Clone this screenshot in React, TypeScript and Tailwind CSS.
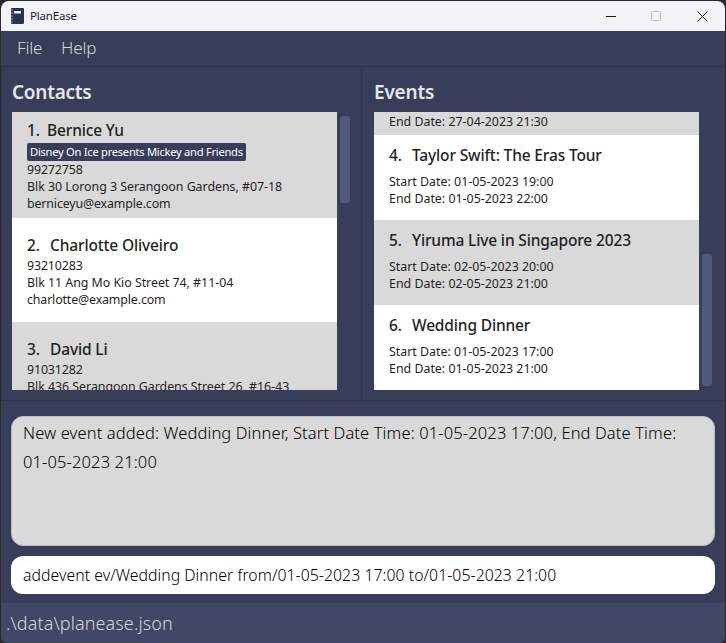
const font = { fontFamily: '"Noto Sans", "Open Sans", sans-serif' };

function ContactCard({ index, name, tag, phone, address, email, shaded }: {
  index: number;
  name: string;
  tag?: string;
  phone: string;
  address: string;
  email?: string;
  shaded: boolean;
}) {
  return (
    <div className={`${shaded ? 'bg-[#d9d9d9]' : 'bg-white'} px-[15px] ${tag ? 'h-[106px] pt-[7px]' : 'h-[104px] pt-[16px]'} shrink-0`}>
      <div className="flex text-[15.5px] leading-[22px] font-medium text-[#1f1f1f] tracking-[-0.15px]">
        <span className={`${index === 1 ? 'w-[20px]' : 'w-[23px]'} whitespace-nowrap`}>{index}.</span>
        <span>{name}</span>
      </div>
      {tag && (
        <div className="mt-[2px] flex">
          <span className="bg-[#383e5a] text-white rounded-[2px] px-[3px] h-[18px] text-[11.2px] leading-[18px] tracking-[-0.28px] whitespace-nowrap">{tag}</span>
        </div>
      )}
      <div className={`${tag ? '' : 'mt-[1px]'} text-[12.4px] leading-[17px] text-[#1f1f1f] tracking-[-0.14px] whitespace-nowrap`}>
        <div>{phone}</div>
        <div className="tracking-[-0.03px]">{address}</div>
        {email && <div>{email}</div>}
      </div>
    </div>
  );
}

function EventCard({ index, name, start, end, shaded }: {
  index: number;
  name: string;
  start: string;
  end: string;
  shaded: boolean;
}) {
  return (
    <div className={`${shaded ? 'bg-[#d9d9d9]' : 'bg-white'} h-[85px] px-[15px] pt-[9px] shrink-0`}>
      <div className="flex text-[15.5px] leading-[22px] font-medium text-[#1f1f1f] tracking-[-0.15px]">
        <span className="w-[23px]">{index}.</span>
        <span>{name}</span>
      </div>
      <div className="mt-[7px] text-[12.4px] leading-[17px] text-[#1f1f1f] whitespace-nowrap">
        <div>Start Date: {start}</div>
        <div>End Date: {end}</div>
      </div>
    </div>
  );
}

export default function App() {
  return (
    <div className="w-[726px] h-[643px] bg-[#2a2a2c] pt-px px-px overflow-hidden" style={font}>
      <div className="w-[724px] h-[642px] rounded-t-[8px] rounded-b-[6px] overflow-hidden flex flex-col bg-[#383e5a]">
        {/* title bar */}
        <div className="h-[30px] bg-[#f1f3f9] flex items-center shrink-0">
          <svg className="ml-[9px] w-[15px] h-[17px]" viewBox="0 0 15 17">
            <rect x="1" y="0" width="13" height="16" rx="1" fill="#2b3350" />
            <rect x="4" y="3" width="7" height="2.5" fill="#e8eaf0" />
            <path d="M1 2h2M1 5h2M1 8h2M1 11h2M1 14h2" stroke="#8f96aa" strokeWidth="1" />
          </svg>
          <span className="ml-[5px] text-[11.5px] text-[#1a1a1a] tracking-[-0.2px]">PlanEase</span>
          <div className="ml-auto flex items-center">
            <svg className="w-[10px] h-[10px] mr-[35px]" viewBox="0 0 10 10">
              <path d="M0 5.5h10" stroke="#1a1a1a" strokeWidth="1" />
            </svg>
            <svg className="w-[10px] h-[10px] mr-[36px]" viewBox="0 0 10 10">
              <rect x="0.5" y="0.5" width="9" height="9" rx="1" fill="none" stroke="#c4c4c8" strokeWidth="1" />
            </svg>
            <svg className="w-[11px] h-[11px] mr-[17px]" viewBox="0 0 11 11">
              <path d="M0.5 0.5l10 10M10.5 0.5l-10 10" stroke="#1a1a1a" strokeWidth="1" />
            </svg>
          </div>
        </div>

        {/* menu */}
        <div className="h-[35px] flex items-center pl-[16px] pb-[2px] gap-[19px] text-[17px] text-[#d4d6de] font-light shrink-0 tracking-[-0.2px]">
          <span>File</span>
          <span>Help</span>
        </div>

        {/* split pane */}
        <div className="h-[335px] border-y border-[#2e3450] flex shrink-0">
          <div className="w-[361px] border-r border-[#2e3450] border-l pl-[10px] shrink-0">
            <h2 className="h-[45px] pt-[11px] text-[19px] leading-[28px] font-semibold text-[#e6e7ec] tracking-[-0.25px]">Contacts</h2>
            <div className="flex">
              <div className="w-[325px] h-[278px] overflow-hidden flex flex-col">
                <ContactCard index={1} name="Bernice Yu" tag="Disney On Ice presents Mickey and Friends" phone="99272758" address="Blk 30 Lorong 3 Serangoon Gardens, #07-18" email="berniceyu@example.com" shaded />
                <ContactCard index={2} name="Charlotte Oliveiro" phone="93210283" address="Blk 11 Ang Mo Kio Street 74, #11-04" email="charlotte@example.com" shaded={false} />
                <ContactCard index={3} name="David Li" phone="91031282" address="Blk 436 Serangoon Gardens Street 26, #16-43" shaded />
              </div>
              <div className="ml-[3px] mt-[4px] w-[10px] h-[87px] rounded-[3px] bg-[#525a7a]" />
            </div>
          </div>
          <div className="pl-[12px] flex-1">
            <h2 className="h-[45px] pt-[11px] text-[19px] leading-[28px] font-semibold text-[#e6e7ec] tracking-[-0.2px]">Events</h2>
            <div className="flex">
              <div className="w-[325px] h-[278px] overflow-hidden flex flex-col">
                <div className="h-[23px] bg-[#d9d9d9] px-[15px] text-[12.4px] leading-[19px] text-[#1f1f1f] shrink-0">End Date: 27-04-2023 21:30</div>
                <EventCard index={4} name="Taylor Swift: The Eras Tour" start="01-05-2023 19:00" end="01-05-2023 22:00" shaded={false} />
                <EventCard index={5} name="Yiruma Live in Singapore 2023" start="02-05-2023 20:00" end="02-05-2023 21:00" shaded />
                <EventCard index={6} name="Wedding Dinner" start="01-05-2023 17:00" end="01-05-2023 21:00" shaded={false} />
              </div>
              <div className="ml-[3px] mt-[142px] w-[10px] h-[132px] rounded-[3px] bg-[#525a7a]" />
            </div>
          </div>
        </div>

        {/* result and command */}
        <div className="px-[10px] pt-[15px] flex-1 flex flex-col">
          <div className="h-[130px] rounded-[12px] bg-[#d9d9d9] border border-[#b8bac4] pl-[11px] pr-[35px] pt-px text-[16.5px] leading-[29px] font-light text-black tracking-[0.12px]">
            New event added: Wedding Dinner, Start Date Time: 01-05-2023 17:00, End Date Time: 01-05-2023 21:00
          </div>
          <div className="mt-[10px] h-[38px] rounded-[12px] bg-white px-[12px] text-[15.8px] leading-[38px] font-light text-black tracking-[0.05px] whitespace-nowrap">
            addevent ev/Wedding Dinner from/01-05-2023 17:00 to/01-05-2023 21:00
          </div>
        </div>

        {/* status bar */}
        <div className="h-[40px] bg-[#414766] pl-[5px] text-[18px] leading-[40px] font-light text-[#d4d6de] tracking-[0.1px] shrink-0">.\data\planease.json</div>
      </div>
    </div>
  );
}
